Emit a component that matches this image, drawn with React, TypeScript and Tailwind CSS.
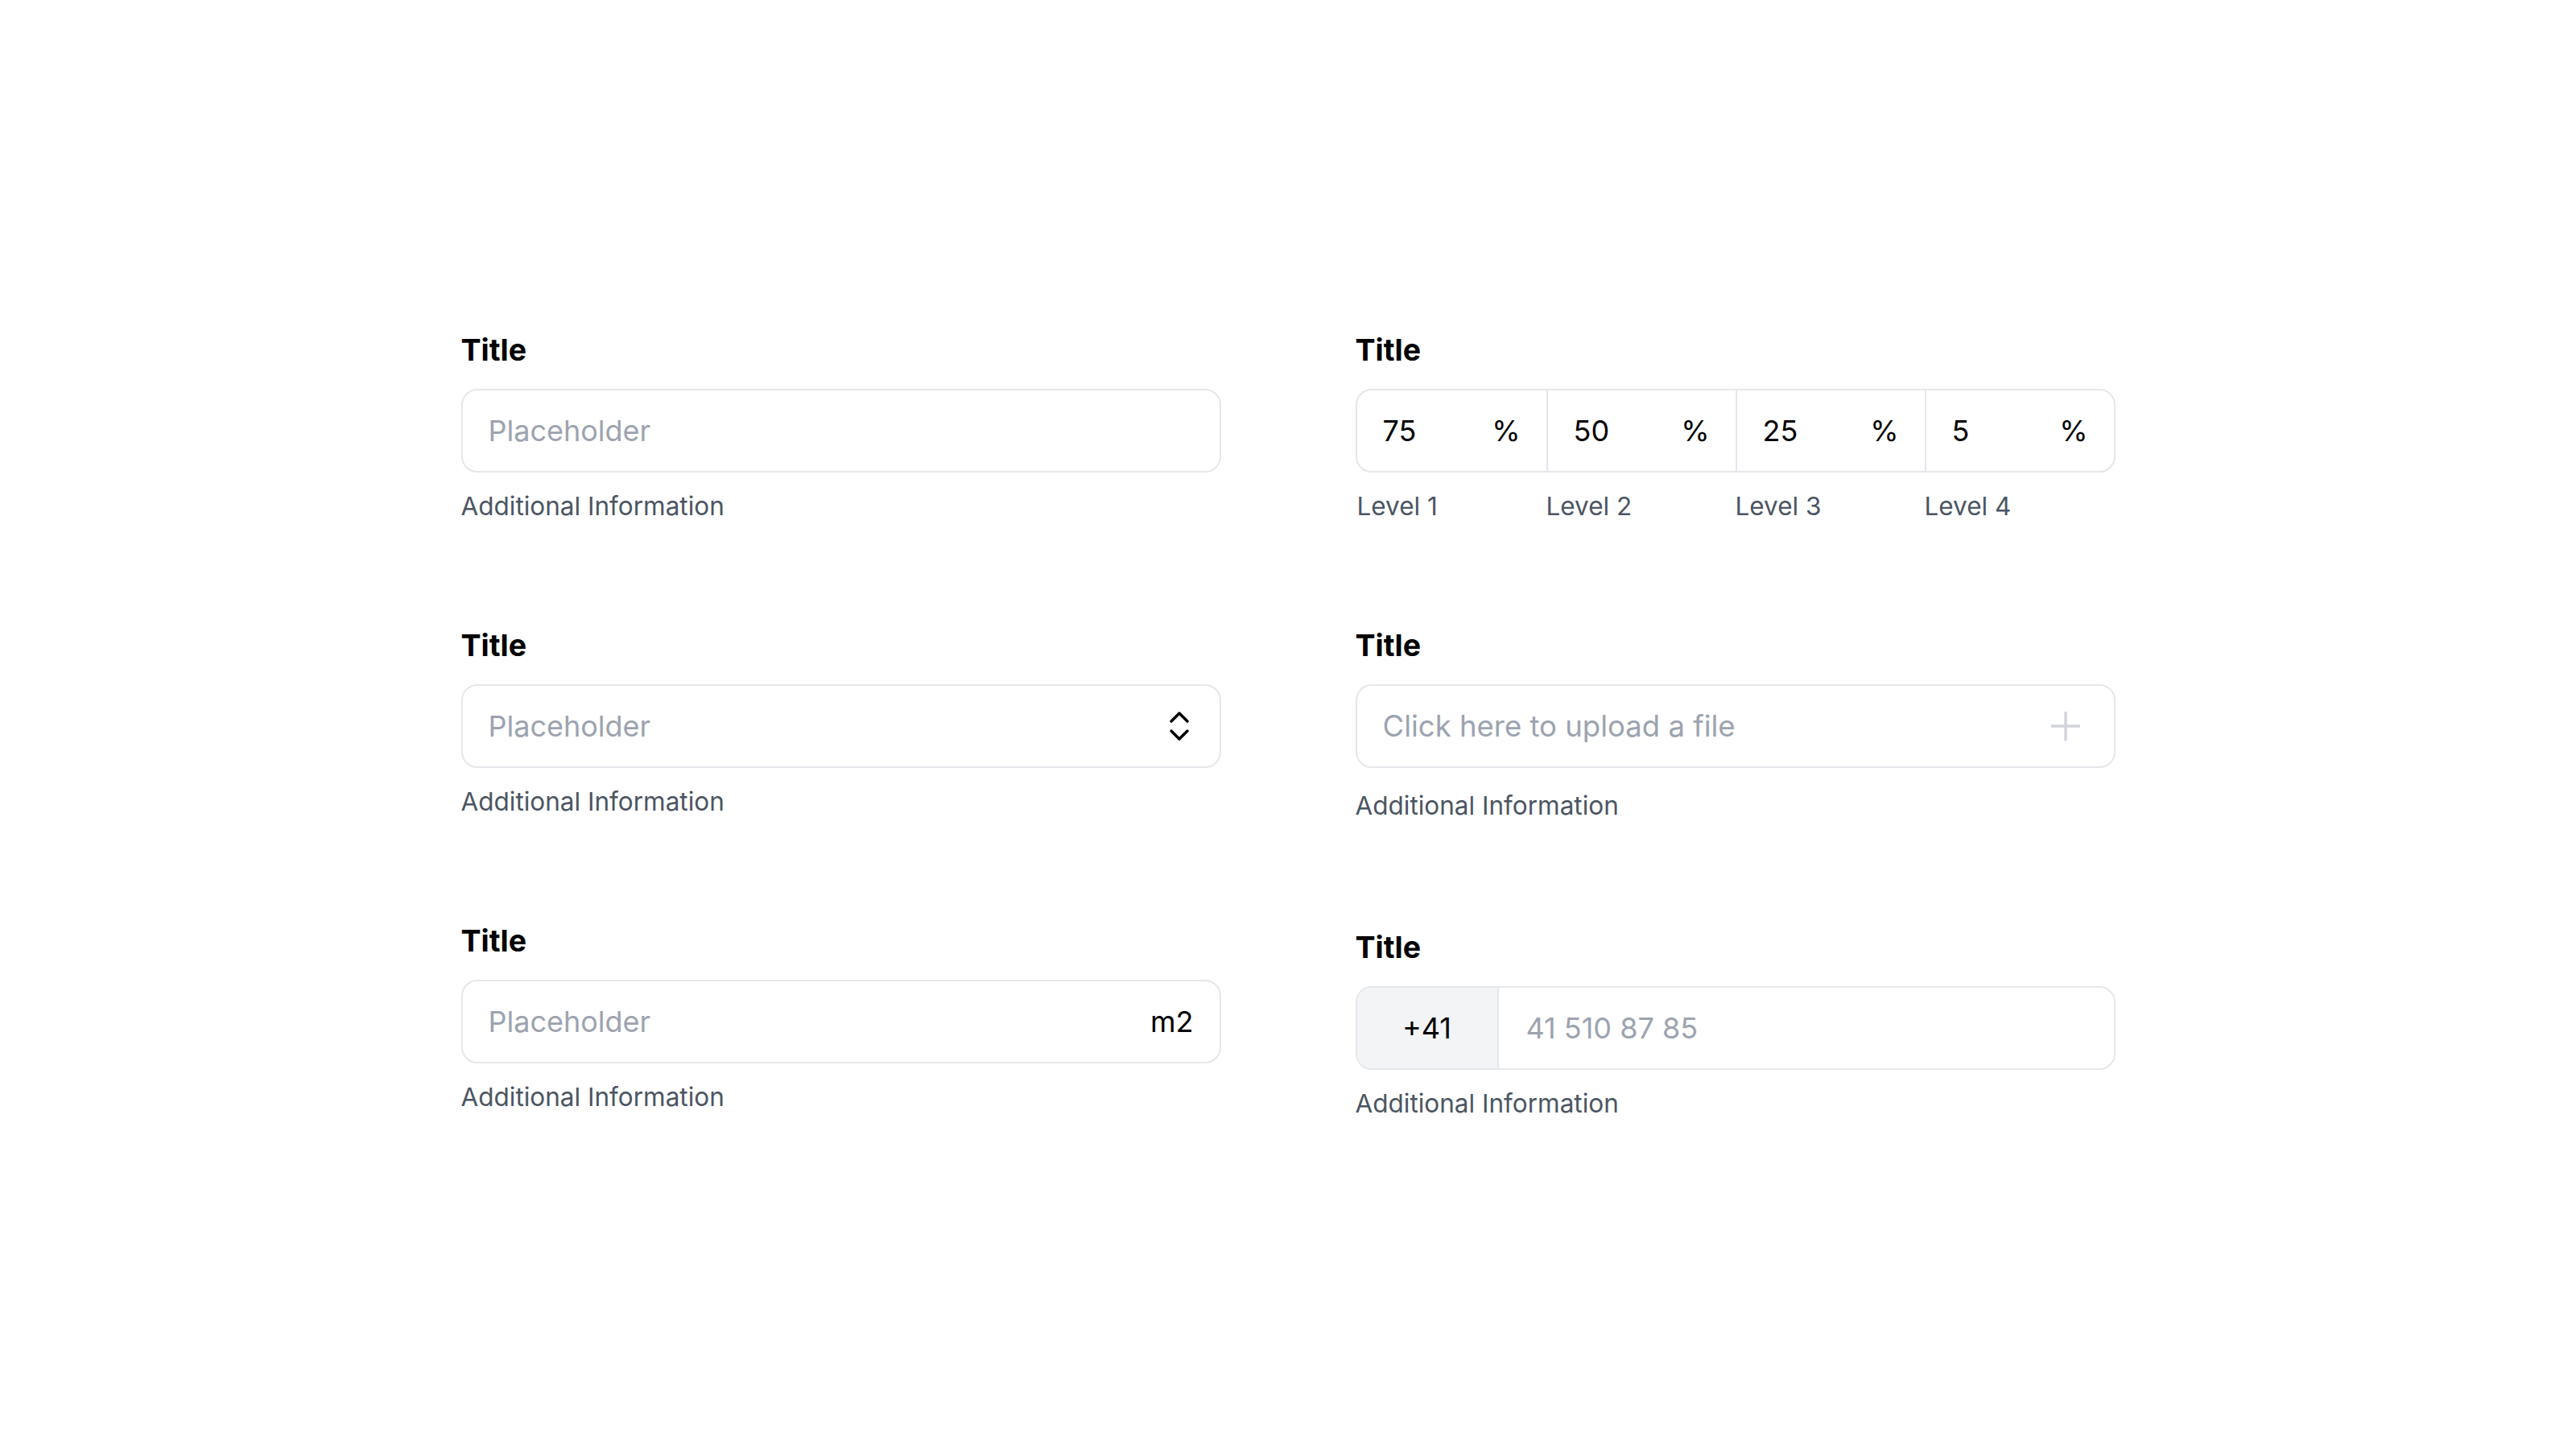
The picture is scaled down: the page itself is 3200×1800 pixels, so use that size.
import React from "react";
import { ChevronsUpDown } from "lucide-react";

const boxBase =
  "h-[104px] w-full rounded-[20px] border-2 border-[#e5e7eb] bg-white flex items-center overflow-hidden";

function Field({
  title,
  children,
  info,
  infoClassName = "mt-[22px]",
}: {
  title: string;
  children: React.ReactNode;
  info: React.ReactNode;
  infoClassName?: string;
}) {
  return (
    <div className="flex flex-col">
      <div className="text-[37.5px] leading-[44px] font-bold text-black">{title}</div>
      <div className="mt-[26px]">{children}</div>
      <div className={`${infoClassName} text-[31.5px] leading-[40px] text-[#4b5563]`}>{info}</div>
    </div>
  );
}

function PlusIcon() {
  return (
    <svg width="40" height="40" viewBox="0 0 40 40" fill="none" className="shrink-0">
      <path d="M20 2v36M2 20h36" stroke="#d1d5db" strokeWidth="3.5" />
    </svg>
  );
}

const levels = [
  { value: "75", label: "Level 1" },
  { value: "50", label: "Level 2" },
  { value: "25", label: "Level 3" },
  { value: "5", label: "Level 4" },
];

export default function App() {
  return (
    <div className="min-h-screen w-full bg-white flex justify-center pt-[413px] font-['Inter','Noto_Sans',sans-serif] antialiased">
      <div className="flex gap-x-[167px] items-start">
        {/* Left column */}
        <div className="w-[944px] flex flex-col gap-y-[131px]">
          <Field title="Title" info="Additional Information">
            <div className={boxBase}>
              <input
                className="w-full h-full bg-transparent outline-none pl-[32px] pr-[32px] text-[36px] text-black placeholder:text-[#9ca3af]"
                placeholder="Placeholder"
              />
            </div>
          </Field>

          <Field title="Title" info="Additional Information">
            <button type="button" className={`${boxBase} justify-between pl-[32px] pr-[26px] text-left`}>
              <span className="text-[36px] text-[#9ca3af]">Placeholder</span>
              <ChevronsUpDown size={48} strokeWidth={1.75} color="#000" />
            </button>
          </Field>

          <Field title="Title" info="Additional Information">
            <div className={`${boxBase} pr-[32px]`}>
              <input
                className="flex-1 min-w-0 h-full bg-transparent outline-none pl-[32px] text-[36px] text-black placeholder:text-[#9ca3af]"
                placeholder="Placeholder"
              />
              <span className="text-[36px] text-black">m2</span>
            </div>
          </Field>
        </div>

        {/* Right column */}
        <div className="w-[944px] flex flex-col">
          <Field
            title="Title"
            info={
              <div className="grid grid-cols-4 pl-[2px] pr-[2px]">
                {levels.map((l) => (
                  <span key={l.label}>{l.label}</span>
                ))}
              </div>
            }
          >
            <div className={`${boxBase} grid grid-cols-4`}>
              {levels.map((l, i) => (
                <div
                  key={l.label}
                  className={`h-full flex items-center pl-[32px] pr-[32px] ${i > 0 ? "border-l-2 border-[#e5e7eb]" : ""}`}
                >
                  <input
                    className="flex-1 min-w-0 bg-transparent outline-none text-[36px] text-black"
                    defaultValue={l.value}
                  />
                  <span className="text-[36px] text-black">%</span>
                </div>
              ))}
            </div>
          </Field>

          <div className="mt-[131px]">
            <Field title="Title" info="Additional Information" infoClassName="mt-[27px]">
              <button type="button" className={`${boxBase} justify-between pl-[32px] pr-[40px] text-left`}>
                <span className="text-[36.5px] text-[#9ca3af]">Click here to upload a file</span>
                <PlusIcon />
              </button>
            </Field>
          </div>

          <div className="mt-[134px]">
            <Field title="Title" info="Additional Information">
              <div className={boxBase}>
                <div className="h-full w-[176px] shrink-0 bg-[#f3f4f6] border-r-2 border-[#e5e7eb] flex items-center justify-center text-[36px] text-black">
                  +41
                </div>
                <input
                  className="flex-1 min-w-0 h-full bg-transparent outline-none pl-[34px] pr-[32px] text-[36px] text-black placeholder:text-[#9ca3af]"
                  placeholder="41 510 87 85"
                />
              </div>
            </Field>
          </div>
        </div>
      </div>
    </div>
  );
}
